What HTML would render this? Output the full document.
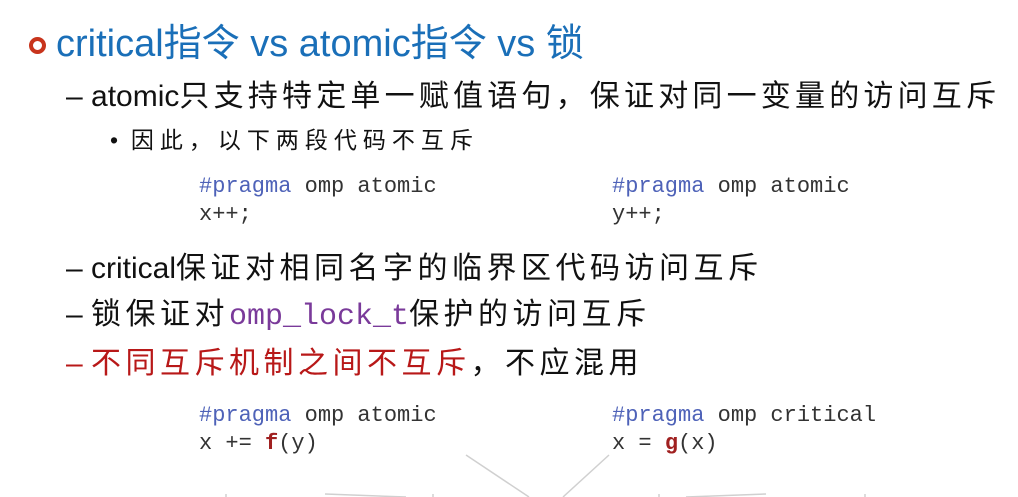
<!DOCTYPE html>
<html><head><meta charset="utf-8"><style>
body{margin:0;width:1018px;height:497px;background:#fff;position:relative;overflow:hidden;font-family:"Liberation Sans","Noto Sans CJK SC",sans-serif;}
.t{position:absolute;white-space:nowrap;line-height:1;}
.c{letter-spacing:4.5px}
.m{font-family:"Liberation Mono",monospace;font-size:22px;color:#333;}
.k{color:#4e62b8}
</style></head><body>
<div style="position:absolute;left:29px;top:37px;width:9px;height:9px;border:4px solid #c8341c;border-radius:50%"></div>
<div class="t" style="left:56px;top:25px;font-size:38px;color:#1a6fb8">critical指令 vs atomic指令 vs 锁</div>
<div class="t" style="left:66px;top:82px;font-size:30px;color:#111">– atomic<span style="letter-spacing:4.2px">只支持特定单一赋值语句，保证对同一变量的访问互斥</span></div>
<div class="t" style="left:110px;top:129px;font-size:23px;color:#111">•&nbsp; <span style="letter-spacing:6px">因此，以下两段代码不互斥</span></div>
<div class="t m" style="left:199px;top:176px"><span class="k">#pragma</span> omp atomic</div>
<div class="t m" style="left:199px;top:204px">x++;</div>
<div class="t m" style="left:612px;top:176px"><span class="k">#pragma</span> omp atomic</div>
<div class="t m" style="left:612px;top:204px">y++;</div>
<div class="t" style="left:66px;top:254px;font-size:30px;color:#111">– critical<span class="c">保证对相同名字的临界区代码访问互斥</span></div>
<div class="t" style="left:66px;top:300px;font-size:30px;color:#111">– <span class="c">锁保证对</span><span style="font-family:'Liberation Mono',monospace;color:#7a3a9a">omp_lock_t</span><span class="c">保护的访问互斥</span></div>
<div class="t" style="left:66px;top:349px;font-size:30px;color:#b81818">– <span class="c">不同互斥机制之间不互斥</span><span class="c" style="color:#111">，不应混用</span></div>
<div class="t m" style="left:199px;top:405px"><span class="k">#pragma</span> omp atomic</div>
<div class="t m" style="left:199px;top:433px">x += <b style="color:#a02020">f</b>(y)</div>
<div class="t m" style="left:612px;top:405px"><span class="k">#pragma</span> omp critical</div>
<div class="t m" style="left:612px;top:433px">x = <b style="color:#a02020">g</b>(x)</div>
<svg style="position:absolute;left:0;top:0" width="1018" height="497"><g stroke="#d0d0d0" stroke-width="1.5" fill="none">
<line x1="226" y1="494" x2="226" y2="497"/><line x1="433" y1="494" x2="433" y2="497"/>
<line x1="325" y1="494" x2="406" y2="497"/><line x1="466" y1="455" x2="529" y2="497"/>
<line x1="609" y1="455" x2="563" y2="497"/><line x1="659" y1="494" x2="659" y2="497"/>
<line x1="766" y1="494" x2="686" y2="497"/><line x1="865" y1="494" x2="865" y2="497"/>
</g></svg>
</body></html>
